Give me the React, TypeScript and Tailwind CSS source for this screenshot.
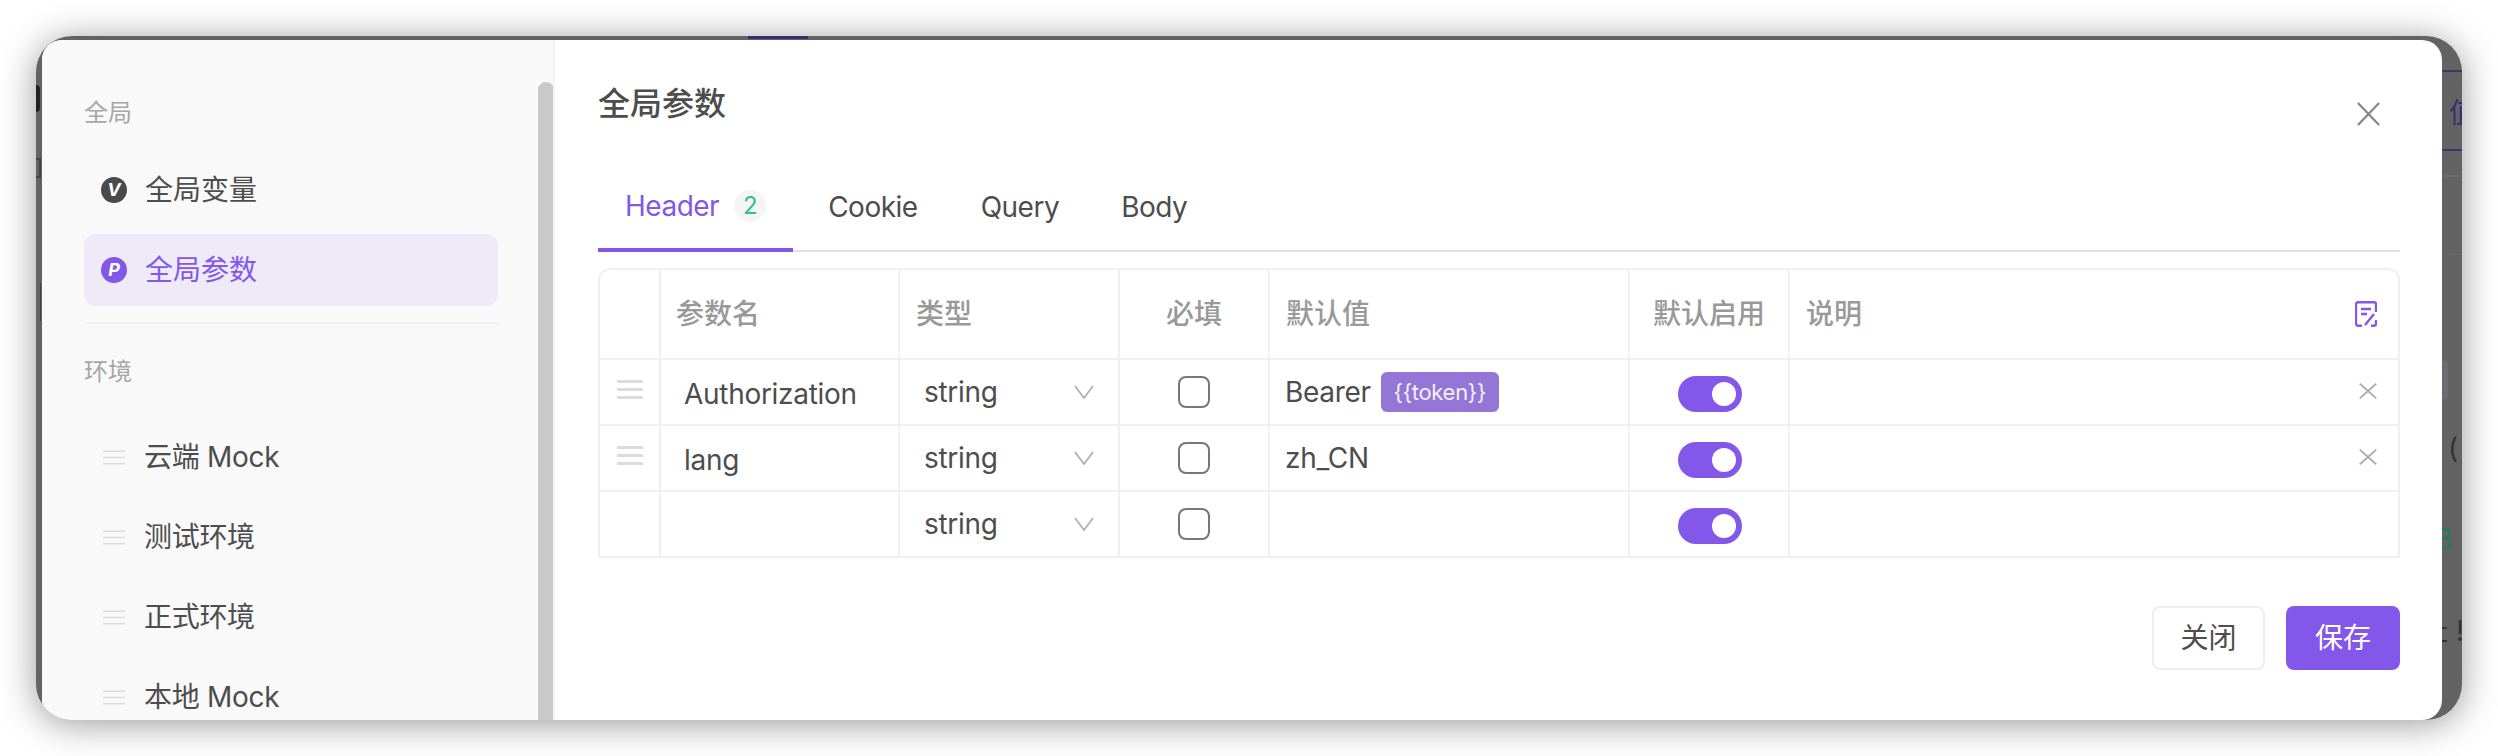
import React from 'react';

const COLS = 'grid grid-cols-[61px_239px_220px_150px_360px_160px_1fr]';
const CELL = 'flex items-center border-r-2 border-[#f0f0f0] h-full';

function VarBadge({ letter, active }: { letter: string; active?: boolean }) {
  return (
    <span
      className={`flex h-[26px] w-[26px] shrink-0 items-center justify-center rounded-full text-[18px] leading-none font-bold italic text-white ${
        active ? 'bg-[#8257ea]' : 'bg-[#4a4a4a]'
      }`}
    >
      {letter}
    </span>
  );
}

function DragLines({ className, stroke }: { className: string; stroke: number }) {
  return (
    <svg className={className} viewBox="0 0 26 19" preserveAspectRatio="none" fill="none" stroke="#dcdcdc" strokeWidth={stroke}>
      <path d="M0 1.5H26M0 9.5H26M0 17.5H26" />
    </svg>
  );
}

function CrossIcon({ className, color }: { className: string; color: string }) {
  return (
    <svg className={className} viewBox="0 0 24 24" fill="none" stroke={color} strokeWidth="2.4" preserveAspectRatio="none">
      <path d="M1 1L23 23M23 1L1 23" />
    </svg>
  );
}

function EnvItem({ label }: { label: string }) {
  return (
    <div className="flex h-[72px] shrink-0 items-center pl-[19px] text-[28px] tracking-[-0.3px] text-[#4d4d4d]">
      <DragLines className="mr-[19px] h-[15px] w-[22px] shrink-0" stroke={2} />
      <span>{label}</span>
    </div>
  );
}

function ParamRow({ name, value, removable, last }: { name?: string; value?: React.ReactNode; removable?: boolean; last?: boolean }) {
  return (
    <div className={`${COLS} tracking-[-0.3px] ${last ? 'h-[64px]' : 'h-[66px] border-b-2 border-[#f0f0f0]'}`}>
      <div className={`${CELL} justify-center pb-[5px]`}>
        {removable && <DragLines className="h-[19px] w-[26px]" stroke={3} />}
      </div>
      <div className={`${CELL} pl-[23px] pt-[3px]`}>{name}</div>
      <div className={`${CELL} justify-between pl-[24px] pr-[24px]`}>
        <span>string</span>
        <svg className="h-[14px] w-[20px]" viewBox="0 0 20 14" fill="none" stroke="#b0b0b0" strokeWidth="1.8">
          <path d="M1 1L10 13L19 1" />
        </svg>
      </div>
      <div className={`${CELL} justify-center`}>
        <span className="h-[32px] w-[32px] rounded-[8px] border-2 border-[#777777]" />
      </div>
      <div className={`${CELL} gap-[10px] pl-[15px]`}>{value}</div>
      <div className={`${CELL} justify-center pt-[4px] pl-[2px]`}>
        <span className="flex h-[36px] w-[64px] items-center justify-end rounded-full bg-[#8257ea] pr-[6px]">
          <span className="h-[24px] w-[24px] rounded-full bg-white" />
        </span>
      </div>
      <div className="flex h-full items-center justify-end pr-[21px] pb-[2px]">
        {removable && <CrossIcon className="h-[16px] w-[18px]" color="#aaaaaa" />}
      </div>
    </div>
  );
}

export default function App() {
  return (
    <div className="h-[756px] w-[2498px] overflow-hidden bg-white pt-[36px] pl-[36px] font-['Inter','Noto_Sans_CJK_SC',sans-serif]">
      <div className="relative flex h-[684px] w-[2426px] overflow-hidden rounded-[36px] bg-[#636363] pt-[4px] pl-[6px] shadow-[0_4px_36px_rgba(0,0,0,0.4)]">
        {/* bits of the page behind the dialog */}
        <div className="absolute top-0 left-[712px] h-[3px] w-[60px] bg-[#3a2f6e]" />
        <div className="absolute top-[49px] left-0 h-[27px] w-[4px] rounded-r-full bg-[#222222]" />
        <div className="absolute top-[122px] left-0 h-[20px] w-[5px] border-2 border-l-0 border-[#444444]" />
        <div className="absolute top-[247px] left-[4px] h-[38px] w-[1px] bg-[#444444]" />

        <div className="flex h-[680px] w-[2400px] shrink-0 overflow-hidden rounded-[20px] bg-white text-[28px] text-[#4d4d4d]">
          {/* sidebar */}
          <aside className="flex w-[513px] shrink-0 overflow-hidden border-r-2 border-[#f2f4f5] bg-[#f9f9f9]">
            <nav className="flex w-[496px] shrink-0 flex-col pt-[55px] pr-[40px] pl-[42px]">
              <div className="h-[36px] text-[24px] leading-[36px] text-[#a6a6a6]">全局</div>
              <div className="mt-[23px] flex h-[72px] shrink-0 items-center gap-[18px] pl-[17px]">
                <VarBadge letter="V" />
                <span>全局变量</span>
              </div>
              <div className="mt-[8px] flex h-[72px] shrink-0 items-center gap-[18px] rounded-[12px] bg-[#eeeaf8] pl-[17px] text-[#8257ea]">
                <VarBadge letter="P" active />
                <span>全局参数</span>
              </div>
              <div className="mt-[16px] h-[2px] shrink-0 bg-[#f2f2f2]" />
              <div className="mt-[30px] h-[36px] shrink-0 text-[24px] leading-[36px] text-[#a6a6a6]">环境</div>
              <div className="mt-[31px] flex flex-col gap-[8px]">
                <EnvItem label="云端 Mock" />
                <EnvItem label="测试环境" />
                <EnvItem label="正式环境" />
                <EnvItem label="本地 Mock" />
              </div>
            </nav>
            <div className="mt-[42px] w-[16px] shrink-0 rounded-t-full bg-[#c9c9c9]" />
          </aside>

          {/* main panel */}
          <main className="flex flex-1 flex-col pt-[42px] pr-[42px] pl-[43px]">
            <div className="flex h-[44px] items-start justify-between pr-[20px]">
              <h2 className="text-[32px] leading-[44px] font-medium">全局参数</h2>
              <CrossIcon className="mt-[20px] h-[24px] w-[23px]" color="#888888" />
            </div>

            <div className="mt-[38px] flex h-[88px] items-center border-b-2 border-[#e2e2e2] tracking-[-0.5px]">
              <div className="-mb-[2px] flex h-[88px] items-center gap-[15px] self-start border-b-4 border-[#8257ea] px-[27px] text-[#8257ea]">
                <span>Header</span>
                <span className="flex h-[32px] w-[32px] items-center justify-center rounded-full bg-[#f5f5f5] text-[24px] text-[#2fbf8a]">2</span>
              </div>
              <span className="pr-[31px] pl-[35px]">Cookie</span>
              <span className="pr-[30px] pl-[32px]">Query</span>
              <span className="px-[32px]">Body</span>
            </div>

            <div className="mt-[16px] flex h-[290px] flex-col overflow-hidden rounded-t-[12px] border-2 border-[#f0f0f0]">
              <div className={`${COLS} h-[90px] shrink-0 border-b-2 border-[#f0f0f0] font-medium text-[#999999]`}>
                <div className={CELL} />
                <div className={`${CELL} pl-[15px]`}>参数名</div>
                <div className={`${CELL} pl-[16px]`}>类型</div>
                <div className={`${CELL} justify-center`}>必填</div>
                <div className={`${CELL} pl-[16px]`}>默认值</div>
                <div className={`${CELL} justify-center`}>默认启用</div>
                <div className="flex h-full items-center justify-between pr-[21px] pl-[16px]">
                  <span>说明</span>
                  <svg className="h-[26px] w-[22px]" viewBox="0 0 22 26" fill="none" stroke="#8257ea" strokeWidth="2.4">
                    <path d="M7 24.8H3a2 2 0 0 1-2-2V3.2a2 2 0 0 1 2-2h16a2 2 0 0 1 2 2V11M21 19v3.8a2 2 0 0 1-2 2h-3" />
                    <path d="M6 8H16M6 13H12M10 24L19 13" />
                  </svg>
                </div>
              </div>
              <ParamRow
                removable
                name="Authorization"
                value={
                  <>
                    <span>Bearer</span>
                    <span className="flex h-[40px] w-[118px] items-center justify-center rounded-[6px] bg-[#9376d6] text-[22px] text-[#f4f0fc]">{'{{token}}'}</span>
                  </>
                }
              />
              <ParamRow removable name="lang" value="zh_CN" />
              <ParamRow last />
            </div>

            <div className="mt-[48px] flex justify-end gap-[21px]">
              <button className="h-[64px] w-[113px] rounded-[8px] border-2 border-[#eeeeee] bg-white">关闭</button>
              <button className="h-[64px] w-[114px] rounded-[8px] bg-[#8257ea] text-white">保存</button>
            </div>
          </main>
        </div>

        {/* right edge of the page behind */}
        <div className="relative h-full flex-1 overflow-hidden text-[28px]">
          <div className="absolute top-[30px] left-0 h-[2px] w-full bg-[#3f3470]" />
          <div className="absolute top-[109px] left-0 h-[2px] w-full bg-[#3f3470]" />
          <div className="absolute top-[135px] left-0 h-[2px] w-full bg-[#6b6b6b]" />
          <div className="absolute top-[214px] left-0 h-[1px] w-full bg-[#6a6a6a]" />
          <div className="absolute top-[320px] left-0 h-[40px] w-[6px] rounded-r-[4px] bg-[#6b6b70]" />
          <span className="absolute top-[52px] left-[7px] text-[#3a2f6e]">值</span>
          <span className="absolute top-[387px] left-[6px] text-[#333333]">(</span>
          <span className="absolute top-[478px] -left-[8px] text-[#247a58]">B</span>
          <span className="absolute top-[570px] -left-[22px] text-[#333333]">址</span>
          <span className="absolute top-[570px] left-[14px] text-[#333333]">!</span>
        </div>
      </div>
    </div>
  );
}
